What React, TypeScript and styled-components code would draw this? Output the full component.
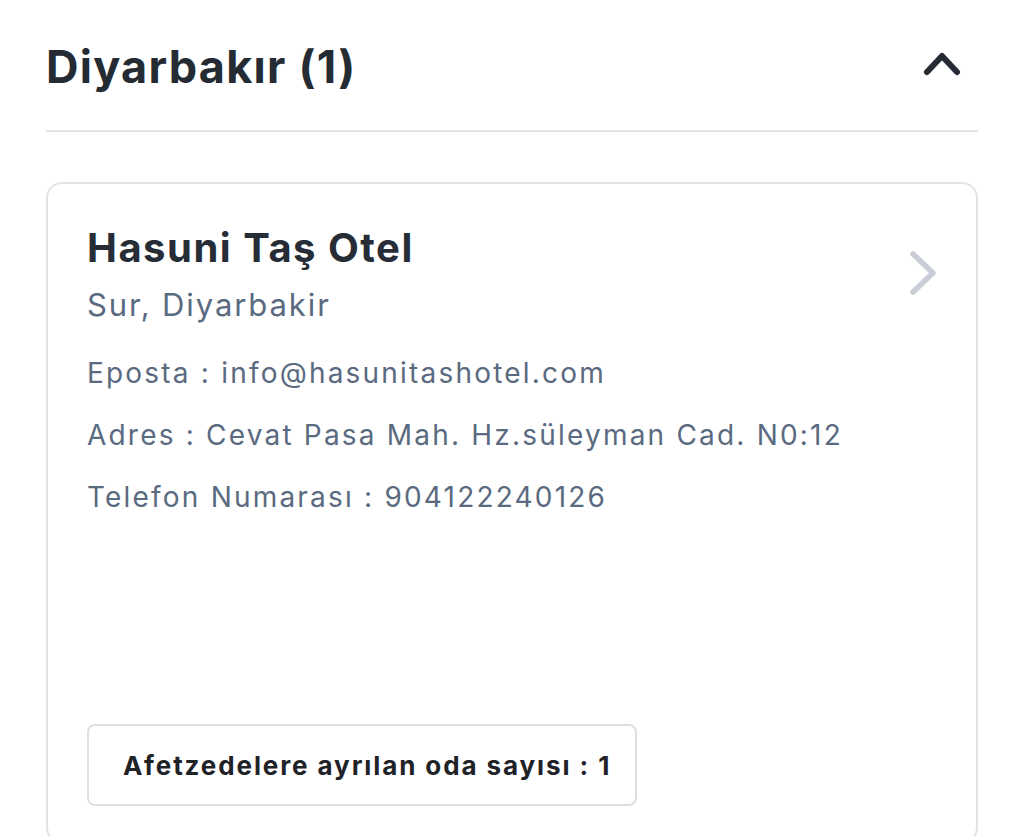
import React from "react";
import styled, { createGlobalStyle } from "styled-components";

const GlobalStyle = createGlobalStyle`
  html, body { margin: 0; padding: 0; background: #ffffff; }
  body { font-family: "Inter", "Open Sans", sans-serif; -webkit-font-smoothing: antialiased; }
  * { box-sizing: border-box; }
`;

const Page = styled.div`
  width: 1024px;
  height: 836px;
  overflow: hidden;
  padding: 0 46px;
`;

const Header = styled.div`
  height: 132px;
  display: flex;
  align-items: center;
  justify-content: space-between;
  border-bottom: 2px solid #e1e3e6;
  padding-top: 4px;
`;

const HeaderTitle = styled.h2`
  margin: 0;
  font-size: 45px;
  line-height: 54px;
  font-weight: 700;
  color: #242b33;
  letter-spacing: 1.25px;
`;

const IconButton = styled.div`
  width: 40px;
  height: 40px;
  display: flex;
  align-items: center;
  justify-content: center;
  margin-right: 16px;
  margin-top: -6px;
`;

const Card = styled.div`
  margin-top: 50px;
  height: 662px;
  border: 2px solid #e1e3e6;
  border-radius: 16px;
  padding: 40px 38px 36px 39px;
  display: flex;
  flex-direction: column;
`;

const TopRow = styled.div`
  display: flex;
  justify-content: space-between;
  align-items: flex-start;
`;

const Info = styled.div`
  display: flex;
  flex-direction: column;
`;

const Name = styled.h3`
  margin: 0;
  font-size: 40px;
  line-height: 48px;
  font-weight: 700;
  color: #262d36;
  letter-spacing: 1.5px;
`;

const Location = styled.div`
  margin-top: 13px;
  font-size: 31px;
  line-height: 40px;
  color: #5a6a80;
  letter-spacing: 1.9px;
`;

const Line = styled.div<{ $first?: boolean }>`
  margin-top: ${(p) => (p.$first ? "28px" : "22px")};
  font-size: 28px;
  line-height: 40px;
  color: #5a6a80;
  letter-spacing: 2.2px;
`;

const Chevron = styled.div`
  margin-top: 26px;
  width: 30px;
  height: 46px;
  display: flex;
  align-items: center;
  justify-content: center;
`;

const RoomBox = styled.div`
  margin-top: auto;
  width: 550px;
  height: 82px;
  border: 2px solid #dcdfe3;
  border-radius: 8px;
  display: flex;
  align-items: center;
  padding-left: 34px;
  font-size: 26px;
  font-weight: 700;
  color: #1f2328;
  letter-spacing: 1.9px;
`;

export default function App() {
  return (
    <>
      <GlobalStyle />
      <Page>
        <Header>
          <HeaderTitle>Diyarbakır (1)</HeaderTitle>
          <IconButton>
            <svg width="40" height="26" viewBox="0 0 40 26" fill="none">
              <polyline points="5,21 20,5 35,21" stroke="#242b33" strokeWidth="6" strokeLinecap="round" strokeLinejoin="round" />
            </svg>
          </IconButton>
        </Header>
        <Card>
          <TopRow>
            <Info>
              <Name>Hasuni Taş Otel</Name>
              <Location>Sur, Diyarbakir</Location>
              <Line $first>Eposta : info@hasunitashotel.com</Line>
              <Line>Adres : Cevat Pasa Mah. Hz.süleyman Cad. N0:12</Line>
              <Line>Telefon Numarası : 904122240126</Line>
            </Info>
            <Chevron>
              <svg width="30" height="46" viewBox="0 0 30 46" fill="none">
                <polyline points="5,4 25,23 5,42" stroke="#c9ced6" strokeWidth="5.5" strokeLinecap="round" strokeLinejoin="round" />
              </svg>
            </Chevron>
          </TopRow>
          <RoomBox>Afetzedelere ayrılan oda sayısı : 1</RoomBox>
        </Card>
      </Page>
    </>
  );
}
